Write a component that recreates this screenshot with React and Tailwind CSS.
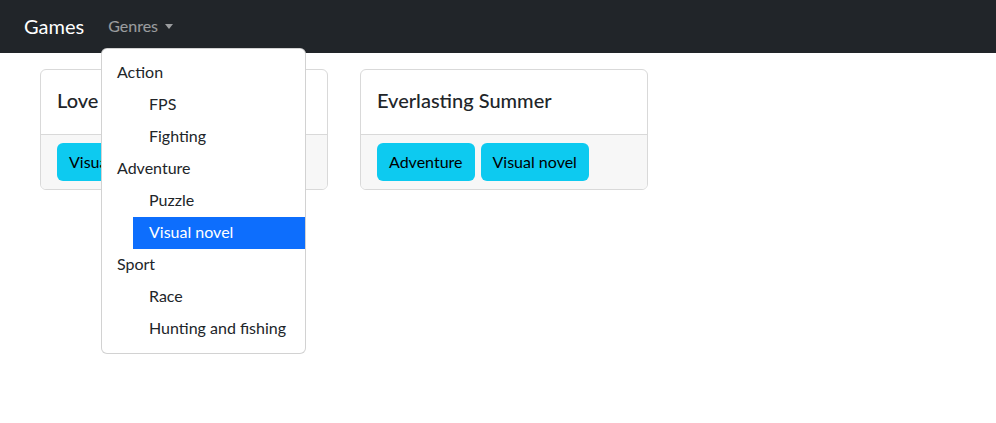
import React from 'react';

const games = [
    { title: 'Love', genres: ['Visual novel'] },
    { title: 'Everlasting Summer', genres: ['Adventure', 'Visual novel'] },
];

const menu = [
    { name: 'Action', children: ['FPS', 'Fighting'] },
    { name: 'Adventure', children: ['Puzzle', 'Visual novel'] },
    { name: 'Sport', children: ['Race', 'Hunting and fishing'] },
];

const App = () => {
    const active = 'Visual novel';

    return (
        <div className="relative w-[996px] h-[423px] bg-white text-[#212529] overflow-hidden whitespace-nowrap" style={{ fontFamily: 'Lato, sans-serif' }}>
            <nav className="h-[53px] bg-[#212529] flex items-center px-6 pb-[2px]">
                <span className="text-[20px] text-white mr-6">Games</span>
                <span className="flex items-center gap-[7px] text-[16px] text-white/55">
                    Genres
                    <span className="w-0 h-0 border-x-[4.5px] border-x-transparent border-t-[5px] border-t-white/55 mt-[1px]" />
                </span>
            </nav>

            <div className="flex gap-8 pt-4 px-10">
                {games.map((game) => (
                    <div key={game.title} className="w-[288px] border border-[#d9d9d9] rounded-md overflow-hidden">
                        <div className="h-[65px] px-4 pb-[5px] flex items-center border-b border-[#d9d9d9]">
                            <h5 className="text-[20px] font-medium">{game.title}</h5>
                        </div>
                        <div className="bg-[#f7f7f7] px-4 py-2 flex gap-[6px]">
                            {game.genres.map((g) => (
                                <span key={g} className="h-[38px] px-3 flex items-center bg-[#0dcaf0] rounded-md text-[16px] text-black">
                                    {g}
                                </span>
                            ))}
                        </div>
                    </div>
                ))}
            </div>

            {/* Genres dropdown */}
            <div className="absolute left-[101px] top-[48px] w-[205px] bg-white border border-black/[0.175] rounded-md py-2 text-[16px]">
                {menu.map((group) => (
                    <div key={group.name}>
                        <div className="h-8 px-[15px] pb-[2px] flex items-center">{group.name}</div>
                        <div className="ml-[31px]">
                            {group.children.map((c) => (
                                <div
                                    key={c}
                                    className={c === active ? 'h-8 px-4 pb-[2px] flex items-center bg-[#0d6efd] text-white' : 'h-8 px-4 pb-[2px] flex items-center'}
                                >
                                    {c}
                                </div>
                            ))}
                        </div>
                    </div>
                ))}
            </div>
        </div>
    );
};

export default App;
